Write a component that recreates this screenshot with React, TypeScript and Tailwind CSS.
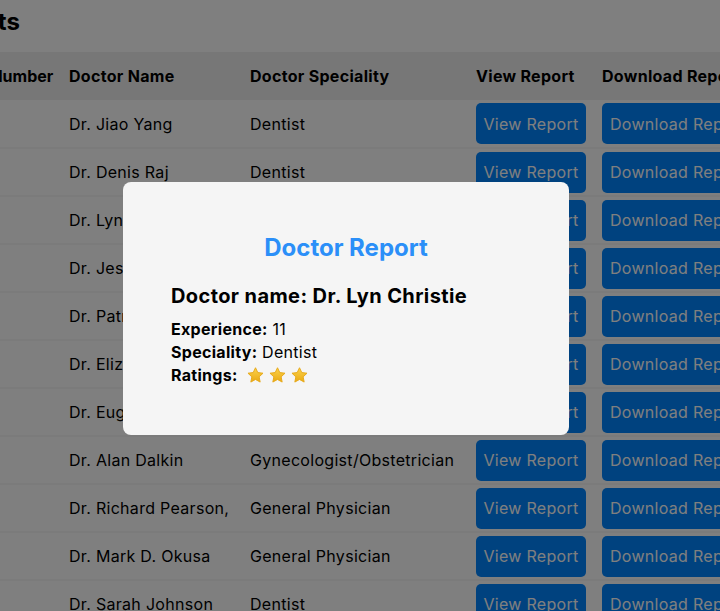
import React from 'react';

interface Doctor {
  id: number;
  name: string;
  speciality: string;
}

const doctors: Doctor[] = [
  { id: 1, name: 'Dr. Jiao Yang', speciality: 'Dentist' },
  { id: 2, name: 'Dr. Denis Raj', speciality: 'Dentist' },
  { id: 3, name: 'Dr. Lyn Christie', speciality: 'Dentist' },
  { id: 4, name: 'Dr. Jessica Miller', speciality: 'Dentist' },
  { id: 5, name: 'Dr. Patricia Hill', speciality: 'Dermatologist' },
  { id: 6, name: 'Dr. Elizabeth Ray', speciality: 'Cardiologist' },
  { id: 7, name: 'Dr. Eugene Harris', speciality: 'Pediatrician' },
  { id: 8, name: 'Dr. Alan Dalkin', speciality: 'Gynecologist/Obstetrician' },
  { id: 9, name: 'Dr. Richard Pearson,', speciality: 'General Physician' },
  { id: 10, name: 'Dr. Mark D. Okusa', speciality: 'General Physician' },
  { id: 11, name: 'Dr. Sarah Johnson', speciality: 'Dentist' },
];

// gold star, a bit rounded like the emoji one
const Star: React.FC = () => (
  <svg width="19" height="19" viewBox="0 0 24 24" aria-hidden="true">
    <defs>
      <linearGradient id="starFill" x1="0" y1="0" x2="0" y2="1">
        <stop offset="0" stopColor="#fcd34d" />
        <stop offset="1" stopColor="#e9a912" />
      </linearGradient>
    </defs>
    <path
      d="M12 2.2l2.9 6.1 6.6.8-4.9 4.6 1.3 6.6L12 17l-5.9 3.3 1.3-6.6-4.9-4.6 6.6-.8z"
      fill="url(#starFill)"
      stroke="#e6a817"
      strokeWidth="1.2"
      strokeLinejoin="round"
    />
  </svg>
);

const ReportModal: React.FC<{ doctor: Doctor; experience: number; rating: number }> = ({ doctor, experience, rating }) => (
  <div className="absolute left-[123px] top-[182px] w-[446px] rounded-lg bg-[#f5f5f5] px-12 py-12">
    <h2 className="text-center text-[24px] leading-9 font-bold text-[#2b8ff8]">Doctor Report</h2>
    <h3 className="mt-4 text-[20px] leading-7 font-bold tracking-[0.4px] text-black">Doctor name: {doctor.name}</h3>
    <div className="mt-2 text-[16px] leading-[23px] tracking-[0.3px] text-black">
      <p>
        <span className="font-bold">Experience:</span> {experience}
      </p>
      <p>
        <span className="font-bold">Speciality:</span> {doctor.speciality}
      </p>
      <p className="flex items-center">
        <span className="font-bold">Ratings:</span>
        <span className="ml-2 flex gap-[3px]">
          {Array.from({ length: rating }).map((_, i) => (
            <Star key={i} />
          ))}
        </span>
      </p>
    </div>
  </div>
);

export default function App() {
  return (
    <div className="relative h-screen w-full overflow-hidden bg-white font-['Inter',sans-serif] text-black">
      <div className="-ml-[66px] w-[860px]">
        <h1 className="-ml-[6px] pt-[6px] text-[24px] leading-8 font-bold">Reports</h1>
        <table className="mt-[14px] w-[860px] table-fixed border-collapse text-left text-[16px] tracking-[0.3px]">
          <colgroup>
            <col className="w-[127px]" />
            <col className="w-[181px]" />
            <col className="w-[226px]" />
            <col className="w-[126px]" />
            <col className="w-[200px]" />
          </colgroup>
          <thead>
            <tr className="h-12 bg-[#efefef]">
              <th className="px-2 font-bold whitespace-nowrap tracking-normal">Serial Number</th>
              <th className="px-2 font-bold">Doctor Name</th>
              <th className="px-2 font-bold">Doctor Speciality</th>
              <th className="px-2 font-bold whitespace-nowrap">View Report</th>
              <th className="px-2 font-bold whitespace-nowrap">Download Report</th>
            </tr>
          </thead>
          <tbody>
            {doctors.map((d) => (
              <tr key={d.id} className="h-12 border-b-2 border-[#f6f6f6] bg-white">
                <td className="px-2">{d.id}</td>
                <td className="px-2 whitespace-nowrap">{d.name}</td>
                <td className="px-2 whitespace-nowrap">{d.speciality}</td>
                <td className="px-2">
                  <button className="h-[41px] w-[110px] rounded-[5px] bg-[#0084ff] text-white">View Report</button>
                </td>
                <td className="px-2">
                  <button className="h-[41px] w-[150px] rounded-[5px] bg-[#0084ff] text-left pl-2 text-white whitespace-nowrap">
                    Download Report
                  </button>
                </td>
              </tr>
            ))}
          </tbody>
        </table>
      </div>

      <div className="absolute inset-0 bg-black/50">
        <ReportModal doctor={doctors[2]} experience={11} rating={3} />
      </div>
    </div>
  );
}
